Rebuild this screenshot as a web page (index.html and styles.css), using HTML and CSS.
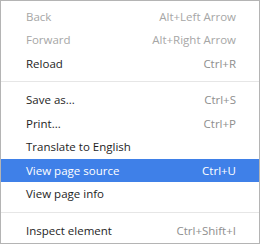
FILE: index.html
```html
<!DOCTYPE html>
<html>
<head>
<meta charset="utf-8">
<link rel="stylesheet" href="styles.css">
</head>
<body>
<div class="menu">
  <div class="item disabled"><span class="label">Back</span><span class="key">Alt+Left Arrow</span></div>
  <div class="item disabled"><span class="label">Forward</span><span class="key">Alt+Right Arrow</span></div>
  <div class="item"><span class="label">Reload</span><span class="key">Ctrl+R</span></div>
  <div class="sep"></div>
  <div class="item"><span class="label">Save as...</span><span class="key">Ctrl+S</span></div>
  <div class="item"><span class="label">Print...</span><span class="key">Ctrl+P</span></div>
  <div class="item"><span class="label">Translate to English</span><span class="key"></span></div>
  <div class="item active"><span class="label">View page source</span><span class="key">Ctrl+U</span></div>
  <div class="item"><span class="label">View page info</span><span class="key"></span></div>
  <div class="sep"></div>
  <div class="item"><span class="label">Inspect element</span><span class="key">Ctrl+Shift+I</span></div>
</div>
</body>
</html>
```
FILE: styles.css
```css
html, body {
  margin: 0;
  padding: 0;
  background: #ffffff;
}
.menu {
  box-sizing: border-box;
  width: 260px;
  height: 244px;
  border: 1px solid #b4b4b4;
  background: #ffffff;
  padding: 3.5px 0 0 0;
  font-family: "Open Sans", "Noto Sans", sans-serif;
  font-size: 11.5px;
  color: #1e1e1e;
}
.item {
  height: 23.5px;
  display: flex;
  align-items: center;
  justify-content: space-between;
  padding: 0 23px 0 25px;
}
.item.disabled {
  color: #a6a6a6;
}
.key {
  color: #8e8e8e;
}
.item.disabled .key {
  color: #a6a6a6;
}
.item.active {
  background: #3f80e8;
  color: #ffffff;
}
.item.active .key {
  color: #ffffff;
}
.sep {
  height: 13px;
  display: flex;
  align-items: center;
}
.sep::before {
  content: "";
  display: block;
  width: 100%;
  height: 1px;
  background: #e6e6e6;
}
```
